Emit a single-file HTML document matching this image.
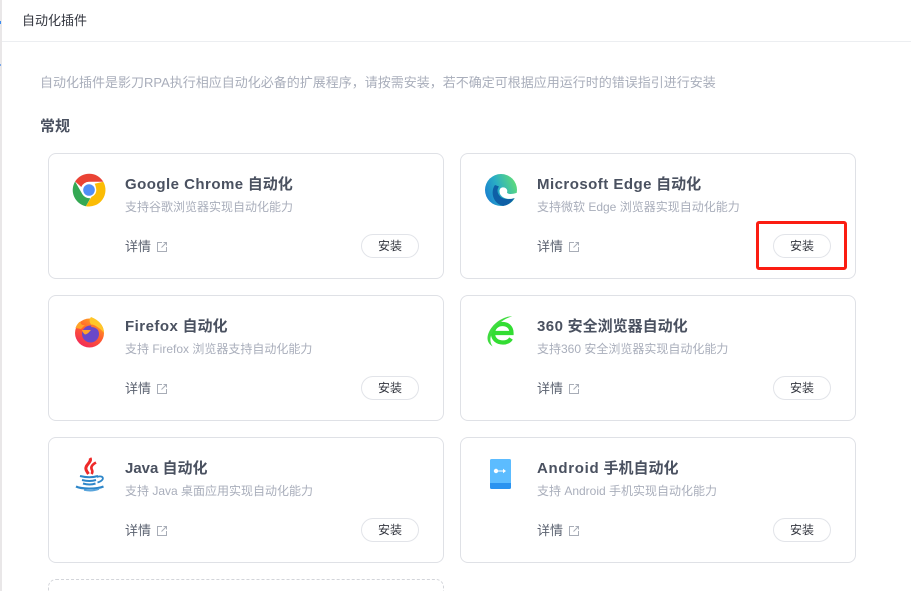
<!DOCTYPE html>
<html lang="zh"><head><meta charset="utf-8"><title>自动化插件</title>
<style>
*{box-sizing:border-box}
html,body{margin:0;padding:0;width:911px;height:591px;overflow:hidden;background:#fff;font-family:"Liberation Sans","Noto Sans CJK SC",sans-serif}
#w{position:relative;width:911px;height:591px;overflow:hidden;background:#fff}
.abs{position:absolute;white-space:nowrap}
.edge{position:absolute;left:0;top:0;width:2px;height:591px;background:#e9e7e8}
.top{left:22px;top:11px;font-size:13px;line-height:20px;color:#33363f}
.hr{position:absolute;left:2px;right:0;top:41px;height:1px;background:#eceef1}
.intro{left:40px;top:73px;font-size:13px;line-height:20px;color:#a9aebb}
.h{left:40px;top:116px;font-size:15px;line-height:21px;font-weight:700;color:#4a5160}
.card{position:absolute;width:396px;height:126px;border:1px solid #dfe1e6;border-radius:8px;background:#fff}
.card svg.ic{position:absolute;left:20px;top:15px;width:40px;height:40px}
.t{position:absolute;left:76px;top:20px;font-size:15px;line-height:22px;font-weight:700;color:#4a5160;white-space:nowrap}
.t span{letter-spacing:.47px}
.d{position:absolute;left:76px;top:44px;font-size:12px;line-height:18px;color:#a9aebb;white-space:nowrap}
.m{position:absolute;left:76px;top:83px;font-size:13px;line-height:20px;color:#5b6270;white-space:nowrap}
.x{position:absolute;left:107px;top:87px;width:12px;height:12px}
.b{position:absolute;left:312px;top:80px;width:58px;height:24px;border:1px solid #e2e4e9;border-radius:12px;font-size:12px;line-height:22px;text-align:center;color:#33363f;background:#fff}
.dash{position:absolute;left:48px;top:579px;width:396px;height:40px;border:1px dashed #d3d5da;border-radius:8px}
.red{position:absolute;left:756px;top:221px;width:91px;height:49px;border:3px solid #fb1d12;border-radius:3px}
</style></head><body><div id="w">
<div class="edge"></div>
<div style="position:absolute;left:0;top:21px;width:1px;height:3px;background:#3c8cf0"></div>
<div style="position:absolute;left:0;top:64px;width:1px;height:2px;background:#7aa8e8"></div>
<div class="abs top">自动化插件</div>
<div class="hr"></div>
<div class="abs intro">自动化插件是影刀RPA执行相应自动化必备的扩展程序，请按需安装，若不确定可根据应用运行时的错误指引进行安装</div>
<div class="abs h">常规</div>

<div class="card" style="left:48px;top:153px">
<svg class="ic" style="top:16px" viewBox="0 0 40 40">
<path d="M6.100 11.500A16.500 16.500 0 0 1 34.300 11.800L20 11.800A8.200 8.200 0 0 0 12.300 17Z" fill="#ea4335"/>
<path d="M6.100 11.500L13.400 24.200A8.200 8.200 0 0 0 21.400 28.200L16.900 36.200A16.500 16.500 0 0 1 6.100 11.500Z" fill="#34a853"/>
<path d="M34.300 11.800A16.500 16.500 0 0 1 16.900 36.200L24.200 24A8.200 8.200 0 0 0 25.600 13.800Z" fill="#fbbc05"/>
<circle cx="20" cy="20" r="7.300" fill="#fff"/>
<circle cx="20" cy="20" r="5.800" fill="#4f8ef7"/>
</svg>
<div class="t"><span>Google Chrome</span> 自动化</div>
<div class="d">支持谷歌浏览器实现自动化能力</div>
<div class="m">详情</div>
<svg class="x" viewBox="0 0 12 12" fill="none" stroke="#a8adb7"><path d="M6 1.500H1.500V10.500H10.500V6M5.500 6.500L10.500 1.500M7.500 1.500H10.500V4.500"/></svg>
<div class="b">安装</div>
</div>

<div class="card" style="left:460px;top:153px">
<svg class="ic" style="top:16px" viewBox="0 0 40 40">
<defs>
<linearGradient id="e1" x1="0" y1="0.700" x2="1" y2="0.300"><stop offset="0" stop-color="#1a7fd0"/><stop offset=".45" stop-color="#2aaec4"/><stop offset="1" stop-color="#5fdc78"/></linearGradient>
</defs>
<circle cx="20" cy="20" r="16" fill="url(#e1)"/>
<path d="M14 15C9.500 21 11 33 22 36C27 35.500 31 32 33.500 28C28 30 21 29.500 18 25C16 22 16 19 18 16.500Z" fill="#0e5fa6"/>
<path d="M18.500 21C18.500 17.500 22 16.500 24.500 18C26.500 19.500 26.500 21 26 22.500C27 24.500 31 24.500 37 22.500L37 37L33.500 37L33.500 28C28 30 23 28.500 20.500 26C19 24.500 18.500 23 18.500 21Z" fill="#fff"/>
</svg>
<div class="t"><span>Microsoft Edge</span> 自动化</div>
<div class="d">支持微软 Edge 浏览器实现自动化能力</div>
<div class="m">详情</div>
<svg class="x" viewBox="0 0 12 12" fill="none" stroke="#a8adb7"><path d="M6 1.500H1.500V10.500H10.500V6M5.500 6.500L10.500 1.500M7.500 1.500H10.500V4.500"/></svg>
<div class="b">安装</div>
</div>

<div class="card" style="left:48px;top:295px">
<svg class="ic" viewBox="0 0 40 40">
<defs><linearGradient id="f1" x1="0.800" y1="0" x2="0.200" y2="1"><stop offset="0" stop-color="#ffb020"/><stop offset=".5" stop-color="#ff5a30"/><stop offset="1" stop-color="#f0245e"/></linearGradient></defs>
<circle cx="20.500" cy="22" r="14.500" fill="url(#f1)"/>
<path d="M22 6C30 9 35 15 35 22C32 18 28 15 23 14C20 12 20 8 22 6Z" fill="#ffc629"/>
<path d="M6.500 17C8 13 10 11 11.500 10.500C11.500 13 13 14.500 16 14L12 18Z" fill="#ffa329"/>
<circle cx="21.500" cy="23" r="8.500" fill="#6a48c8"/>
<path d="M13 19H22C20 21 19 23 16 23.500C14.500 22.500 13.500 21 13 19Z" fill="#ffa329"/>
<path d="M23 13.500C27 14 31 18 31 22C29 18 26 16 22 16Z" fill="#ff7a2a"/>
</svg>
<div class="t"><span>Firefox</span> 自动化</div>
<div class="d">支持 Firefox 浏览器支持自动化能力</div>
<div class="m">详情</div>
<svg class="x" viewBox="0 0 12 12" fill="none" stroke="#a8adb7"><path d="M6 1.500H1.500V10.500H10.500V6M5.500 6.500L10.500 1.500M7.500 1.500H10.500V4.500"/></svg>
<div class="b">安装</div>
</div>

<div class="card" style="left:460px;top:295px">
<svg class="ic" viewBox="0 0 40 40">
<path d="M13 22H30.500C30.500 15.500 26 13 21.500 13C15.500 13 12 17.500 12 22.500C12 28 16 31.500 22 31.500C26 31.500 28.500 30 30 27.500" fill="none" stroke="#33dd33" stroke-width="4.200"/>
<path d="M6.500 27C7 19 14 11 22 7.500C26 5.800 29 5 31 5.500C24 7 12 15 9.500 27C9 31 10.500 34 11.800 35.500C8.500 33.500 6.500 31 6.500 27Z" fill="#3fdc3f"/>
</svg>
<div class="t"><span>360</span> 安全浏览器自动化</div>
<div class="d">支持360 安全浏览器实现自动化能力</div>
<div class="m">详情</div>
<svg class="x" viewBox="0 0 12 12" fill="none" stroke="#a8adb7"><path d="M6 1.500H1.500V10.500H10.500V6M5.500 6.500L10.500 1.500M7.500 1.500H10.500V4.500"/></svg>
<div class="b">安装</div>
</div>

<div class="card" style="left:48px;top:437px">
<svg class="ic" viewBox="0 0 40 40" fill="none">
<path d="M21 5C23.500 9 15.500 12 17 16.500C17.500 18 18.500 19.500 19.500 21" stroke="#ee2a2a" stroke-width="3"/>
<path d="M27 9.500C22.500 12 21.500 14.500 23 17C23.800 18.500 23.500 19.500 22.500 21" stroke="#ee2a2a" stroke-width="2.600"/>
<path d="M11 23C17 24.500 24 24.500 29 23" stroke="#2d86c9" stroke-width="2"/>
<path d="M13 27C18 28.300 23 28.300 27 27" stroke="#2d86c9" stroke-width="2"/>
<path d="M14 30.500C18 31.700 23 31.700 26.500 30.500" stroke="#2d86c9" stroke-width="2"/>
<path d="M28 24C32 22.500 35 24 33.500 26.500C32.500 28 30.500 29 28.500 29.500" stroke="#2d86c9" stroke-width="1.800"/>
<path d="M7 33.500C12 36 27 36.500 34.500 33.500" stroke="#2d86c9" stroke-width="2.200"/>
<path d="M15 37C20 38 26 37.600 30 36" stroke="#5aa5dc" stroke-width="1.600"/>
</svg>
<div class="t"><span style="letter-spacing:0">Java</span> 自动化</div>
<div class="d">支持 Java 桌面应用实现自动化能力</div>
<div class="m">详情</div>
<svg class="x" viewBox="0 0 12 12" fill="none" stroke="#a8adb7"><path d="M6 1.500H1.500V10.500H10.500V6M5.500 6.500L10.500 1.500M7.500 1.500H10.500V4.500"/></svg>
<div class="b">安装</div>
</div>

<div class="card" style="left:460px;top:437px">
<svg class="ic" viewBox="0 0 40 40"><g transform="translate(-1 0)">
<path d="M10 7.500A1.500 1.500 0 0 1 11.500 6H29.500A1.500 1.500 0 0 1 31 7.500V30H10Z" fill="#5cbcff"/>
<path d="M10 30H31V34.500A1.500 1.500 0 0 1 29.500 36H11.500A1.500 1.500 0 0 1 10 34.500Z" fill="#2a93f0"/>
<circle cx="16" cy="18" r="2.200" fill="#fff"/><path d="M17 17.500H24V18.500H17Z" fill="#fff"/><path d="M23 15.800L26 18L23 20.200Z" fill="#fff"/>
</g></svg>
<div class="t"><span style="letter-spacing:.7px">Android</span> 手机自动化</div>
<div class="d">支持 Android 手机实现自动化能力</div>
<div class="m">详情</div>
<svg class="x" viewBox="0 0 12 12" fill="none" stroke="#a8adb7"><path d="M6 1.500H1.500V10.500H10.500V6M5.500 6.500L10.500 1.500M7.500 1.500H10.500V4.500"/></svg>
<div class="b">安装</div>
</div>

<div class="dash"></div>
<div class="red"></div>
</div></body></html>
